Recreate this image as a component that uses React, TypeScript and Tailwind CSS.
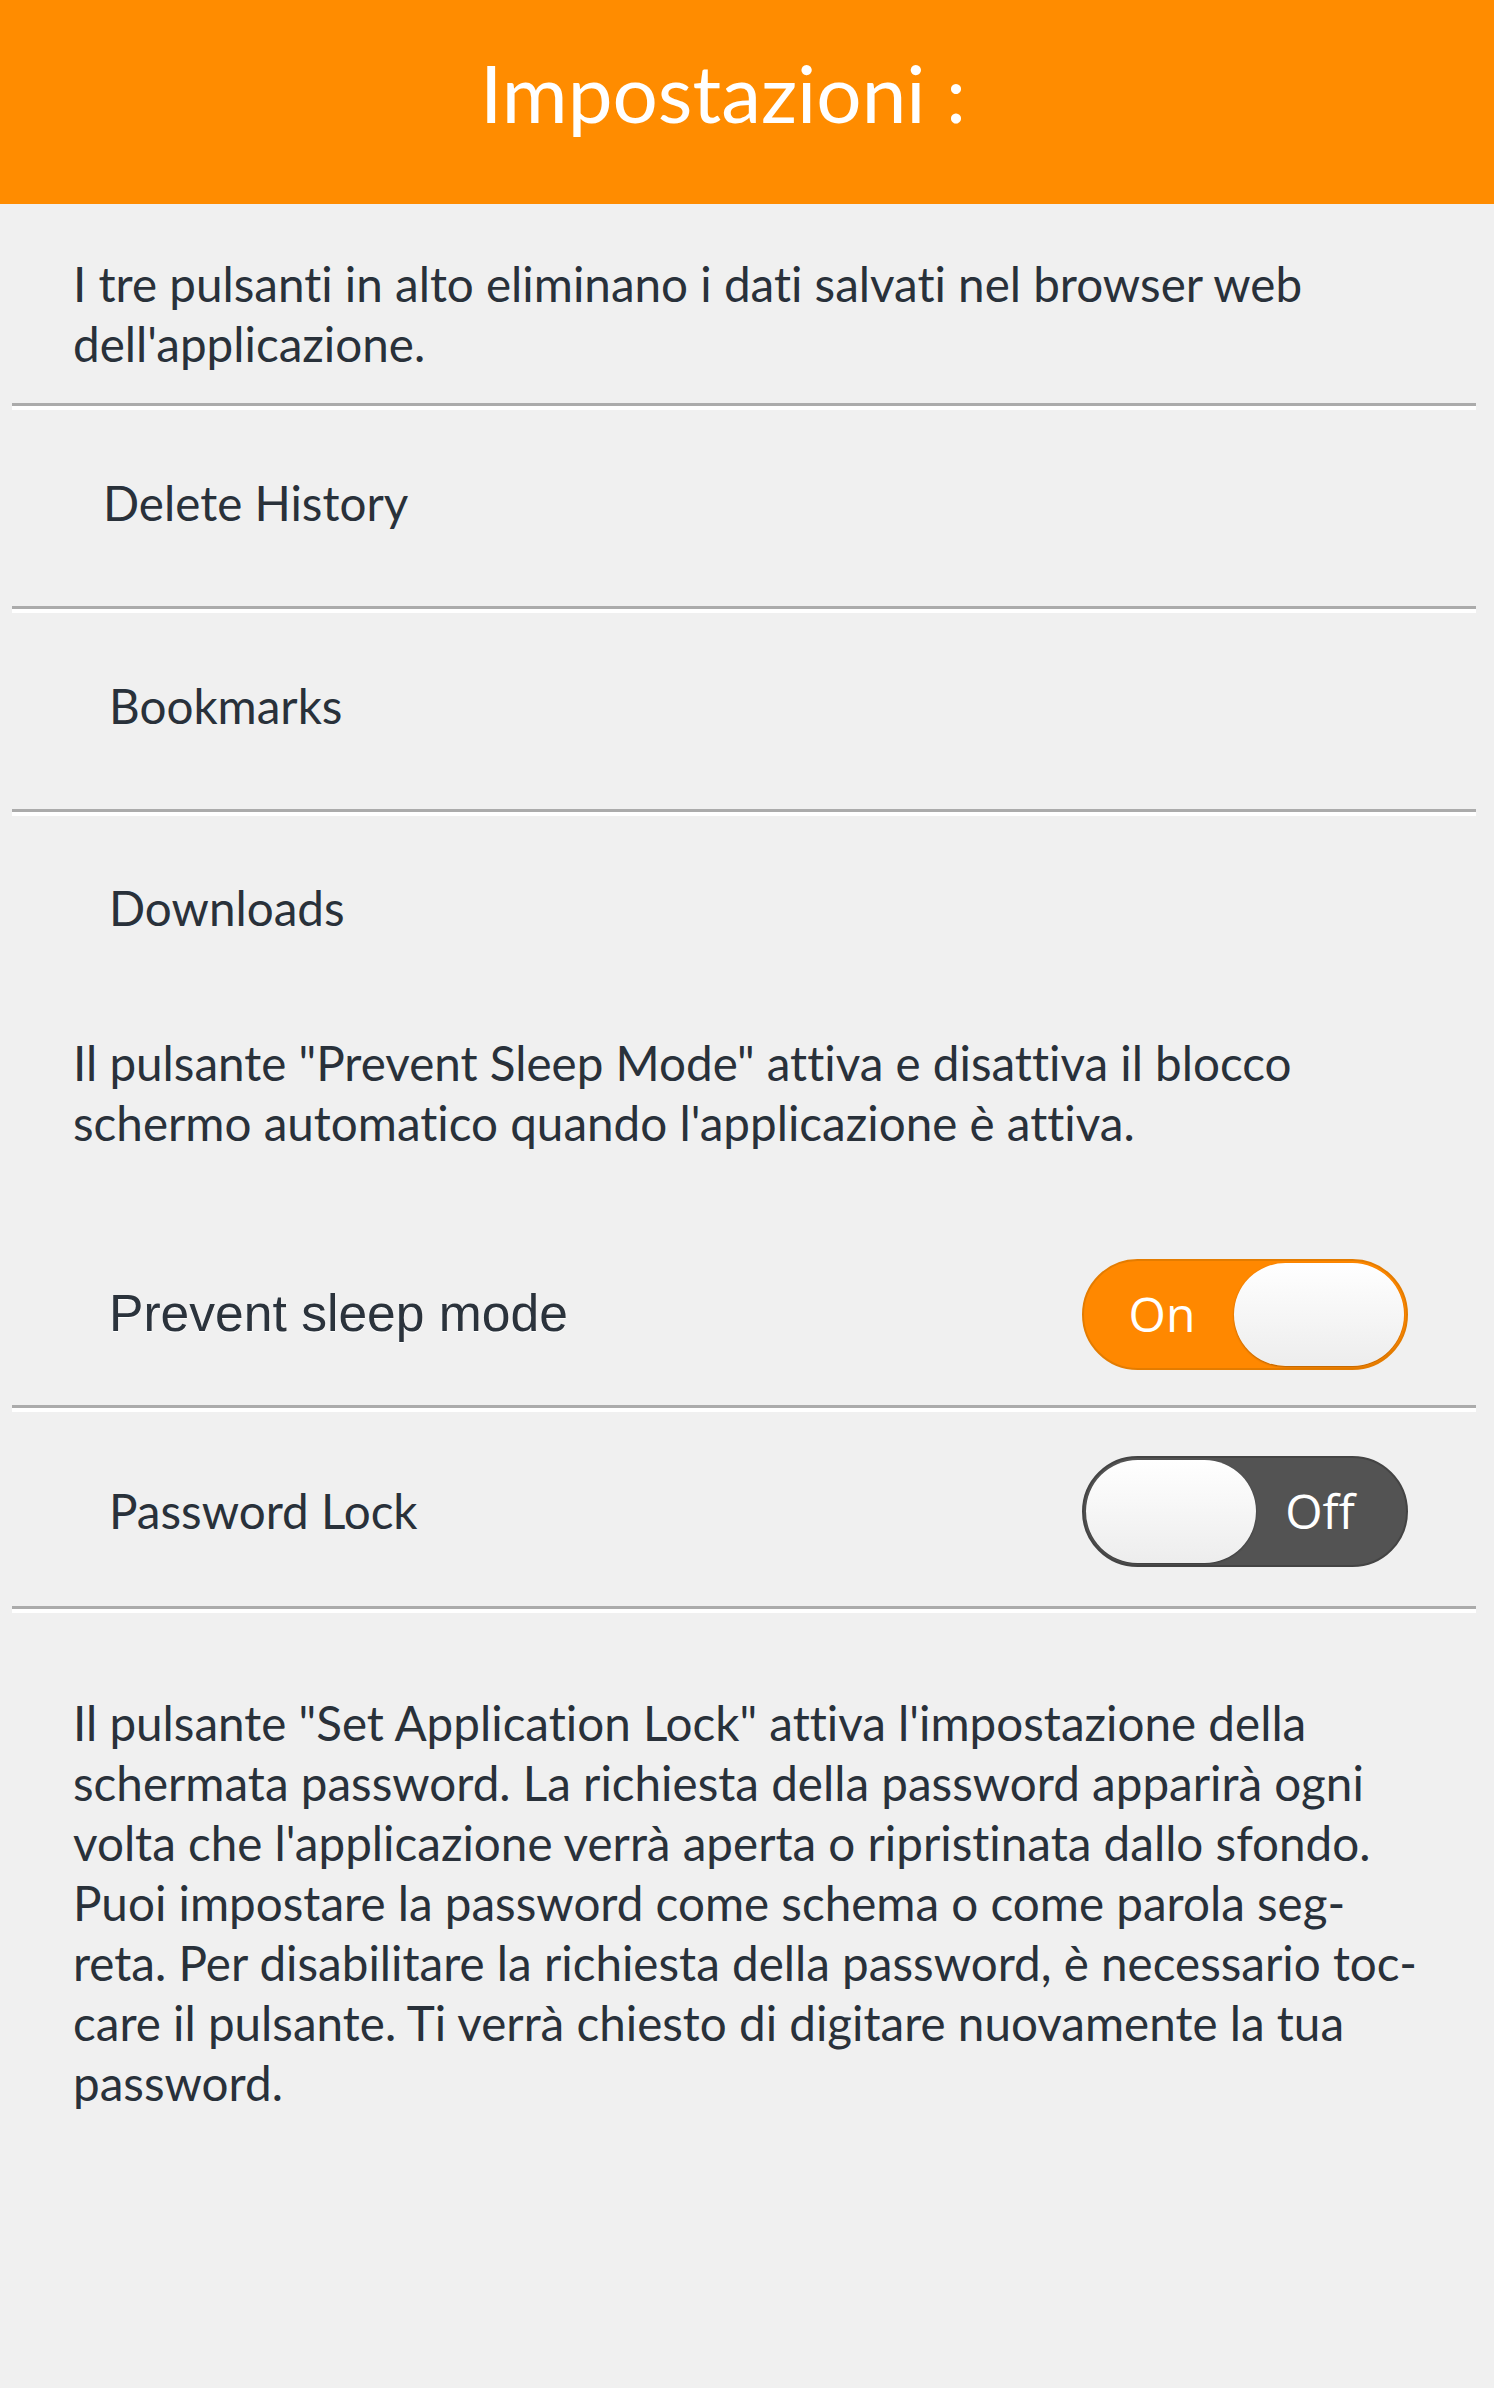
const body = "font-['Lato',sans-serif] [font-variant-ligatures:none]";

const introLines = [
  "I tre pulsanti in alto eliminano i dati salvati nel browser web",
  "dell'applicazione.",
];

const sleepLines = [
  'Il pulsante "Prevent Sleep Mode" attiva e disattiva il blocco',
  "schermo automatico quando l'applicazione è attiva.",
];

const lockLines = [
  'Il pulsante "Set Application Lock" attiva l\'impostazione della',
  "schermata password. La richiesta della password apparirà ogni",
  "volta che l'applicazione verrà aperta o ripristinata dallo sfondo.",
  "Puoi impostare la password come schema o come parola seg-",
  "reta. Per disabilitare la richiesta della password, è necessario toc-",
  "care il pulsante. Ti verrà chiesto di digitare nuovamente la tua",
  "password.",
];

const Divider = () => (
  <div className="h-[7px] border-t-[3px] border-t-[#ababab] bg-white" />
);

const Paragraph = ({ lines, className }: { lines: string[]; className: string }) => (
  <div className={`pl-[73px] text-[47.6px] leading-[60px] text-[#29313a] ${body} ${className}`}>
    {lines.map((line, idx) => (
      <span key={idx} className="block whitespace-nowrap">
        {line}
      </span>
    ))}
  </div>
);

const Toggle = ({ on }: { on: boolean }) => {
  const knob = (
    <span className="h-full w-[170px] shrink-0 rounded-full bg-linear-to-b from-white to-[#ededed] shadow-[0_1px_2px_rgba(0,0,0,0.3)]" />
  );
  return (
    <button
      className={`flex h-[111px] w-[326px] shrink-0 items-center rounded-full border-2 p-[2px] ${
        on ? "border-[#e47c00] bg-[#ff8800]" : "border-[#444444] bg-[#535353]"
      }`}
    >
      {!on && knob}
      <span
        className={`flex-1 text-center text-[48px] leading-none text-white font-['Open_Sans',sans-serif] ${
          on ? "pl-[4px]" : "pr-[20px]"
        }`}
      >
        {on ? "On" : "Off"}
      </span>
      {on && knob}
    </button>
  );
};

export default function App() {
  return (
    <div className="min-h-screen w-full bg-[#f0f0f0]">
      <header className="flex h-[204px] items-center justify-center bg-[#ff8c00] pr-[48px] pb-[20px]">
        <h1 className={`text-[80px] font-normal text-white ${body}`}>Impostazioni :</h1>
      </header>

      <Paragraph lines={introLines} className="pt-[50px] pb-[29px]" />

      <div className="ml-[12px] mr-[18px]">
        <Divider />
        <div className={`flex h-[196px] items-center pb-[10px] pl-[91px] text-[47.6px] text-[#29313a] ${body}`}>
          Delete History
        </div>
        <Divider />
        <div className={`flex h-[196px] items-center pb-[10px] pl-[97px] text-[47.6px] text-[#29313a] ${body}`}>
          Bookmarks
        </div>
        <Divider />
        <div className={`flex h-[196px] items-center pb-[12px] pl-[97px] text-[47.6px] text-[#29313a] ${body}`}>
          Downloads
        </div>
      </div>

      <Paragraph lines={sleepLines} className="pt-[21px]" />

      <div className="ml-[12px] mr-[18px]">
        <div className="mt-[70px] flex h-[182px] items-center justify-between pl-[97px] pr-[68px]">
          <span className="text-[51.6px] text-[#2b333c] font-['Liberation_Sans',sans-serif] [text-shadow:0_1px_0_#ffffff]">
            Prevent sleep mode
          </span>
          <Toggle on />
        </div>
        <Divider />
        <div className="flex h-[194px] items-center justify-between pt-[4px] pl-[97px] pr-[68px]">
          <span className={`text-[47.6px] text-[#29313a] ${body}`}>Password Lock</span>
          <Toggle on={false} />
        </div>
        <Divider />
      </div>

      <Paragraph lines={lockLines} className="pt-[80px] pb-[80px]" />
    </div>
  );
}
